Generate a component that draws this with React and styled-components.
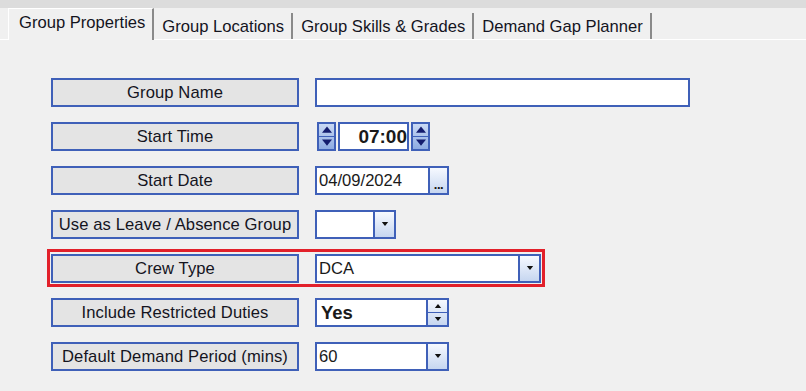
import React from 'react'
import styled, { createGlobalStyle } from 'styled-components'

const GlobalStyle = createGlobalStyle`
  html, body {
    margin: 0;
    padding: 0;
    background: #f0f0f0;
  }
  body {
    width: 806px;
    height: 391px;
    overflow: hidden;
    font-family: "Liberation Sans", Arial, sans-serif;
  }
`

const blue = '#3f60b8'

const Window = styled.div`
  width: 806px;
  height: 391px;
  display: flex;
  flex-direction: column;
  background: #f0f0f0;
`

const TopStrip = styled.div`
  height: 8px;
  background: #dcdcdc;
`

const TabBar = styled.div`
  display: flex;
  align-items: flex-end;
  height: 31px;
  padding-left: 8px;
  border-bottom: 1px solid #ffffff;
`

const Tab = styled.div`
  position: relative;
  box-sizing: border-box;
  height: ${p => (p.active ? '32px' : '26px')};
  margin-bottom: ${p => (p.active ? '-1px' : '0')};
  padding: 4px 7px 0 ${p => (p.active ? '10px' : '8px')};
  line-height: 20px;
  font-size: 16.6px;
  color: #14141e;
  background: #f0f0f0;
  border-top: ${p => (p.active ? '1px solid #ffffff' : 'none')};
  border-left: ${p => (p.active ? '1px solid #ffffff' : 'none')};
  border-right: 2px solid #8a8a8a;
  white-space: nowrap;
  z-index: ${p => (p.active ? 1 : 0)};
`

const Panel = styled.div`
  display: flex;
  flex-direction: column;
  gap: 14px;
  padding: 37px 0 0 51px;
`

const Row = styled.div`
  position: relative;
  display: flex;
  align-items: center;
  gap: 16px;
  height: 30px;
  width: ${p => (p.boxed ? '490px' : 'auto')};

  &::after {
    content: '';
    display: ${p => (p.boxed ? 'block' : 'none')};
    position: absolute;
    left: -4px;
    right: -4px;
    top: -4px;
    bottom: -4px;
    border: 3px solid #e2202a;
    pointer-events: none;
  }
`

const Label = styled.div`
  box-sizing: border-box;
  width: 248px;
  height: 29px;
  display: flex;
  align-items: center;
  justify-content: center;
  padding-top: 2px;
  background: #e4e4e4;
  border: 2px solid ${blue};
  font-size: 16.6px;
  letter-spacing: 0.1px;
  color: #14141e;
  white-space: nowrap;
`

const Field = styled.div`
  box-sizing: border-box;
  display: flex;
  height: 29px;
  width: ${p => p.w}px;
  background: #ffffff;
  border: 2px solid ${blue};
`

const Value = styled.div`
  flex: 1;
  display: flex;
  align-items: center;
  justify-content: ${p => (p.right ? 'flex-end' : 'flex-start')};
  padding: 2px ${p => (p.right ? '0' : '2px')} 0 ${p => (p.bold ? '4px' : '2px')};
  font-size: ${p => p.size || 16.6}px;
  font-weight: ${p => (p.bold ? 700 : 400)};
  color: #1a1a1a;
`

const DropButton = styled.div`
  width: 19px;
  display: flex;
  align-items: center;
  justify-content: center;
  border-left: 2px solid ${blue};
  background: linear-gradient(#f6f9ff, #c6d6f0);
`

const Updown = styled.div`
  width: 19px;
  display: flex;
  flex-direction: column;
  border-left: 2px solid ${blue};
  background: linear-gradient(#f6f9ff, #c6d6f0);

  & > div {
    flex: 1;
    display: flex;
    align-items: center;
    justify-content: center;
  }
  & > div + div {
    border-top: 1px solid ${blue};
  }
`

const TimeGroup = styled.div`
  display: flex;
  align-items: center;
  gap: 2px;
  margin-left: 2px;
`

const Spin = styled.div`
  box-sizing: border-box;
  width: 19px;
  height: 29px;
  display: flex;
  flex-direction: column;
  border: 2px solid ${blue};
  background: linear-gradient(#c9d9f4, #8eabe2);

  & > div {
    flex: 1;
    display: flex;
    align-items: center;
    justify-content: center;
  }
  & > div + div {
    border-top: 1px solid ${blue};
  }
`

const Ellipsis = styled.div`
  width: 19px;
  display: flex;
  align-items: flex-end;
  justify-content: center;
  padding-bottom: 4px;
  box-sizing: border-box;
  border-left: 2px solid ${blue};
  background: linear-gradient(#f6f9ff, #c6d6f0);
  font-size: 13px;
  font-weight: 700;
  line-height: 8px;
  letter-spacing: -0.5px;
  color: #111;
`

const Tri = ({ down, color = '#111', w = 8, h = 5 }) => (
  <svg width={w} height={h} viewBox="0 0 8 5">
    {down ? <polygon points="0,0 8,0 4,5" fill={color} /> : <polygon points="0,5 8,5 4,0" fill={color} />}
  </svg>
)

const SpinButton = () => (
  <Spin>
    <div><Tri color="#141c6e" w={10} h={7} /></div>
    <div><Tri down color="#141c6e" w={10} h={7} /></div>
  </Spin>
)

const Combo = ({ w, text }) => (
  <Field w={w}>
    <Value>{text}</Value>
    <DropButton><Tri down w={8} h={4} /></DropButton>
  </Field>
)

const App = () => {
  return (
    <>
      <GlobalStyle />
      <Window>
        <TopStrip />
        <TabBar>
          <Tab active>Group Properties</Tab>
          <Tab>Group Locations</Tab>
          <Tab>Group Skills &amp; Grades</Tab>
          <Tab>Demand Gap Planner</Tab>
        </TabBar>
        <Panel>
          <Row>
            <Label>Group Name</Label>
            <Field w={375} />
          </Row>
          <Row>
            <Label>Start Time</Label>
            <TimeGroup>
              <SpinButton />
              <Field w={71}>
                <Value bold right size={19}>07:00</Value>
              </Field>
              <SpinButton />
            </TimeGroup>
          </Row>
          <Row>
            <Label>Start Date</Label>
            <Field w={134}>
              <Value>04/09/2024</Value>
              <Ellipsis>...</Ellipsis>
            </Field>
          </Row>
          <Row>
            <Label>Use as Leave / Absence Group</Label>
            <Combo w={81} text="" />
          </Row>
          <Row boxed>
            <Label>Crew Type</Label>
            <Combo w={226} text="DCA" />
          </Row>
          <Row>
            <Label>Include Restricted Duties</Label>
            <Field w={134}>
              <Value bold size={18.5}>Yes</Value>
              <Updown>
                <div><Tri w={8} h={4} /></div>
                <div><Tri down w={8} h={4} /></div>
              </Updown>
            </Field>
          </Row>
          <Row>
            <Label>Default Demand Period (mins)</Label>
            <Combo w={134} text="60" />
          </Row>
        </Panel>
      </Window>
    </>
  )
}

export default App
